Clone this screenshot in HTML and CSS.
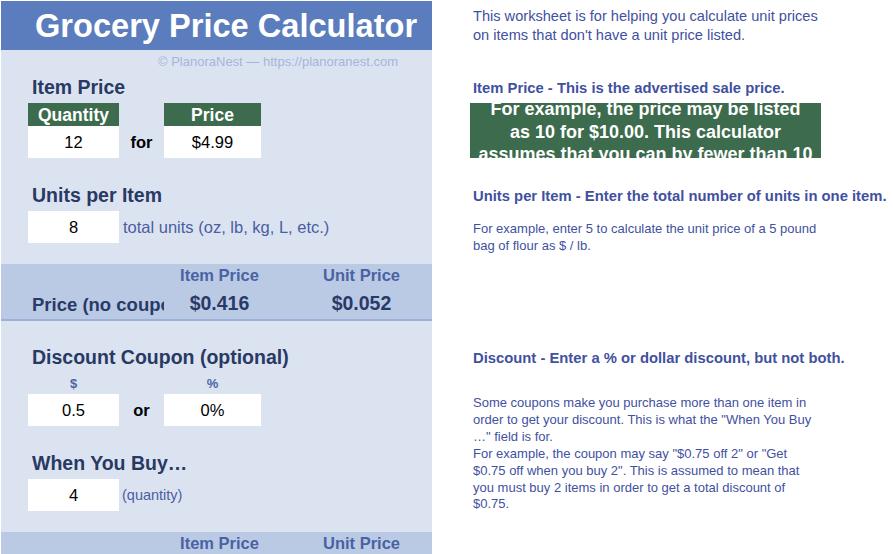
FILE: index.html
```html
<!DOCTYPE html>
<html lang="en">
<head>
<meta charset="utf-8">
<title>Grocery Price Calculator</title>
<link rel="stylesheet" href="styles.css">
</head>
<body>
<div class="page">
  <div class="sheet">
    <div class="title">Grocery Price Calculator</div>
    <div class="copy">© PlanoraNest — https://planoranest.com</div>

    <div class="heading">Item Price</div>
    <div class="cols hdr-row">
      <div class="green">Quantity</div>
      <div></div>
      <div class="green">Price</div>
    </div>
    <div class="cols in-row">
      <div class="box">12</div>
      <div class="conj">for</div>
      <div class="box">$4.99</div>
    </div>
    <div class="gap22"></div>

    <div class="heading">Units per Item</div>
    <div class="cols in-row">
      <div class="box">8</div>
      <div class="note wide">total units (oz, lb, kg, L, etc.)</div>
    </div>
    <div class="gap21"></div>

    <div class="band">
      <div class="band-hdr">
        <div class="lbl"></div>
        <div class="c2">Item Price</div>
        <div class="sp"></div>
        <div class="c3">Unit Price</div>
      </div>
      <div class="band-val">
        <div class="lbl">Price (no coupon)</div>
        <div class="c2">$0.416</div>
        <div class="sp"></div>
        <div class="c3">$0.052</div>
      </div>
    </div>
    <div class="gap21"></div>

    <div class="heading">Discount Coupon (optional)</div>
    <div class="cols lbl-row">
      <div class="small">$</div>
      <div></div>
      <div class="small">%</div>
    </div>
    <div class="cols in-row">
      <div class="box">0.5</div>
      <div class="conj">or</div>
      <div class="box">0%</div>
    </div>
    <div class="gap22"></div>

    <div class="heading">When You Buy…</div>
    <div class="cols in-row">
      <div class="box">4</div>
      <div class="note qty wide">(quantity)</div>
    </div>
    <div class="gap21"></div>

    <div class="band band-last">
      <div class="band-hdr">
        <div class="lbl"></div>
        <div class="c2">Item Price</div>
        <div class="sp"></div>
        <div class="c3">Unit Price</div>
      </div>
    </div>
  </div>

  <div class="notes">
    <div class="intro">This worksheet is for helping you calculate unit prices<br>on items that don't have a unit price listed.</div>
    <div class="n-head">Item Price - This is the advertised sale price.</div>
    <div class="green-note">
      <div class="gn-text">For example, the price may be listed<br>as 10 for $10.00. This calculator<br>assumes that you can by fewer than 10<br>items and still get the sale price.</div>
    </div>
    <div class="n-gap"></div>
    <div class="n-head">Units per Item - Enter the total number of units in one item.</div>
    <div class="n-para p1">For example, enter 5 to calculate the unit price of a 5 pound<br>bag of flour as $ / lb.</div>
    <div class="n-head">Discount - Enter a % or dollar discount, but not both.</div>
    <div class="n-para p2">Some coupons make you purchase more than one item in<br>order to get your discount. This is what the "When You Buy<br>…" field is for.<br>For example, the coupon may say "$0.75 off 2" or "Get<br>$0.75 off when you buy 2". This is assumed to mean that<br>you must buy 2 items in order to get a total discount of<br>$0.75.</div>
  </div>
</div>
</body>
</html>
```

FILE: styles.css
```css
* { box-sizing: border-box; }

html, body {
  margin: 0;
  padding: 0;
  background: #ffffff;
  overflow: hidden;
}

body {
  font-family: "Liberation Sans", Arial, sans-serif;
  width: 893px;
  height: 554px;
}

.page {
  display: flex;
  align-items: flex-start;
}

/* ---------- left sheet ---------- */
.sheet {
  width: 431px;
  height: 553px;
  margin: 1px 0 0 1px;
  background: #dce3f0;
  display: flex;
  flex-direction: column;
  flex-shrink: 0;
  overflow: hidden;
}

.title {
  height: 49px;
  flex-shrink: 0;
  background: #5b7dbd;
  color: #ffffff;
  font-weight: bold;
  font-size: 32.6px;
  display: flex;
  align-items: center;
  padding-left: 34px;
  white-space: nowrap;
}

.copy {
  height: 22px;
  flex-shrink: 0;
  display: flex;
  align-items: center;
  padding-left: 157px;
  font-size: 13px;
  color: #a6b5da;
  white-space: nowrap;
}

.heading {
  height: 31px;
  flex-shrink: 0;
  display: flex;
  align-items: center;
  padding-left: 31px;
  font-size: 19.5px;
  font-weight: bold;
  color: #283963;
  white-space: nowrap;
}

.cols {
  display: grid;
  grid-template-columns: 91px 45px 97px 1fr;
  padding-left: 27px;
  flex-shrink: 0;
}

.hdr-row { height: 23px; }
.in-row { height: 32px; }
.lbl-row { height: 21px; }

.green {
  background: #3d6b4d;
  color: #ffffff;
  font-weight: bold;
  font-size: 17.5px;
  display: flex;
  align-items: center;
  justify-content: center;
  padding-top: 2px;
}

.box {
  background: #ffffff;
  color: #000000;
  font-size: 16.5px;
  display: flex;
  align-items: center;
  justify-content: center;
  padding-top: 1px;
}

.conj {
  font-weight: bold;
  font-size: 16.5px;
  color: #000000;
  display: flex;
  align-items: center;
  justify-content: center;
  padding-top: 1px;
}

.note {
  font-size: 16.5px;
  color: #4a5ea3;
  display: flex;
  align-items: center;
  padding-left: 4px;
  white-space: nowrap;
}

.wide { grid-column: 2 / span 3; }

.note.qty {
  font-size: 14.5px;
  padding-left: 3px;
}

.small {
  font-size: 13px;
  font-weight: bold;
  color: #4c65a6;
  display: flex;
  align-items: center;
  justify-content: center;
}

.gap21 { height: 21px; flex-shrink: 0; }
.gap22 { height: 22px; flex-shrink: 0; }

.band {
  background: #bacae4;
  border-bottom: 2px solid #9cb0d8;
  flex-shrink: 0;
}

.band-last {
  flex: 1;
  border-bottom: 0;
}

.band-hdr,
.band-val {
  display: grid;
  grid-template-columns: 132px 111px 27px 119px;
  padding-left: 31px;
  align-items: center;
  white-space: nowrap;
}

.band-hdr {
  height: 23px;
  font-size: 16.5px;
  font-weight: bold;
  color: #4a62a3;
}

.band-val {
  height: 32px;
  font-weight: bold;
  color: #293a68;
}

.band-hdr .c2, .band-hdr .c3,
.band-val .c2, .band-val .c3 {
  text-align: center;
}

.band-val .lbl {
  font-size: 18.5px;
  overflow: hidden;
  padding-top: 3px;
}

.band-val .c2, .band-val .c3 {
  font-size: 19.5px;
}

/* ---------- right notes ---------- */
.notes {
  padding-left: 41px;
  color: #3f51a0;
  flex: 1;
  min-width: 0;
}

.intro {
  height: 72px;
  padding-top: 7px;
  font-size: 14.6px;
  line-height: 19px;
  white-space: nowrap;
}

.n-head {
  height: 31px;
  display: flex;
  align-items: center;
  font-size: 14.8px;
  font-weight: bold;
  white-space: nowrap;
}

.green-note {
  height: 55px;
  width: 351px;
  margin-left: -3px;
  background: #3d6b4d;
  overflow: hidden;
}

.gn-text {
  margin-top: -5px;
  color: #ffffff;
  font-weight: bold;
  font-size: 18px;
  line-height: 22.5px;
  text-align: center;
  white-space: nowrap;
}

.n-gap { height: 22px; }

.n-para {
  font-size: 13px;
  white-space: nowrap;
}

.p1 {
  height: 131px;
  padding-top: 9px;
  line-height: 17px;
}

.p2 {
  padding-top: 22px;
  line-height: 16.9px;
}
```
